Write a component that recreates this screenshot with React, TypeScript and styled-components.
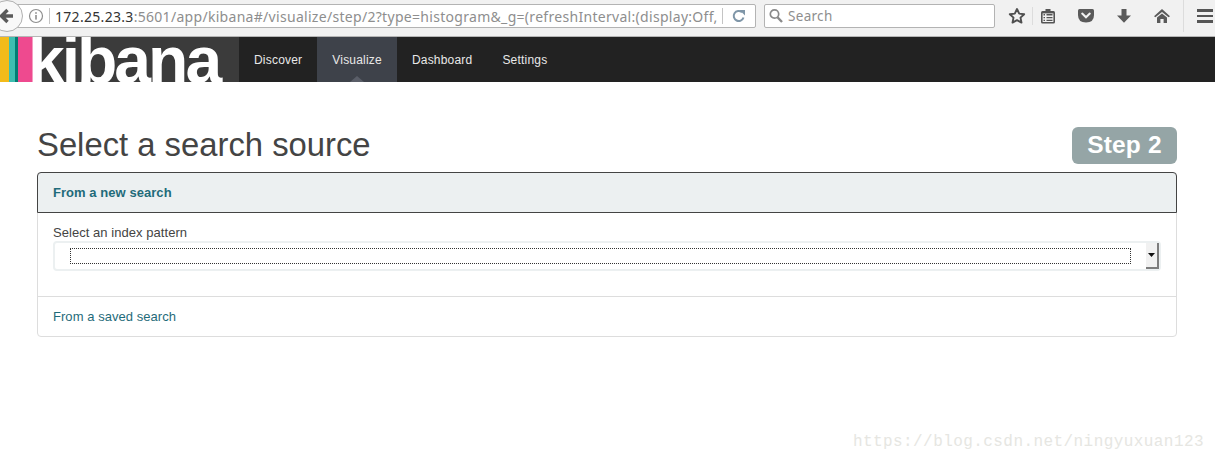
import React from "react";
import styled, { createGlobalStyle } from "styled-components";

const GlobalStyle = createGlobalStyle`
  html, body {
    margin: 0;
    padding: 0;
    background: #fff;
    font-family: "Liberation Sans", Arial, sans-serif;
    overflow: hidden;
  }
`;

const App: React.FC = () => {
  return (
    <Page>
      <GlobalStyle />
      <BrowserBar>
        <BackButton>
          <svg width="15" height="16" viewBox="0 0 15 16">
            <path d="M3 8 H14 M8.5 2 L2.5 8 L8.5 14" fill="none" stroke="#5a5a5a" strokeWidth="3.4" />
          </svg>
        </BackButton>
        <UrlBox>
          <InfoIcon>
            <svg width="16" height="16" viewBox="0 0 16 16">
              <circle cx="8" cy="8" r="6.5" fill="none" stroke="#8e8e8e" strokeWidth="1.2" />
              <rect x="7.2" y="7" width="1.6" height="4.6" fill="#8e8e8e" />
              <rect x="7.2" y="4.2" width="1.6" height="1.6" fill="#8e8e8e" />
            </svg>
          </InfoIcon>
          <UrlDivider />
          <UrlText>
            <UrlHost>172.25.23.3</UrlHost>:5601/app/kibana#/visualize/step/2?type=histogram&amp;_g=(refreshInterval:(display:Off,
          </UrlText>
          <ReloadCell>
            <svg width="14" height="14" viewBox="0 0 14 14">
              <path d="M11.5 8.5 A5 5 0 1 1 10 3.2" fill="none" stroke="#7f96a8" strokeWidth="2" />
              <path d="M7.5 1 L13 1 L13 6.5 Z" fill="#7f96a8" />
            </svg>
          </ReloadCell>
        </UrlBox>
        <SearchBox>
          <svg width="16" height="16" viewBox="0 0 16 16">
            <circle cx="6.5" cy="6" r="4.2" fill="none" stroke="#8a8a8a" strokeWidth="1.7" />
            <path d="M9.5 9.2 L14 14" stroke="#8a8a8a" strokeWidth="2.4" />
          </svg>
          <SearchText>Search</SearchText>
        </SearchBox>
        <ToolIcons>
          <ToolIcon $width={31}>
            <svg width="18" height="18" viewBox="0 0 18 18">
              <path d="M9 2 L11.2 6.6 L16.2 7.2 L12.5 10.6 L13.5 15.6 L9 13.1 L4.5 15.6 L5.5 10.6 L1.8 7.2 L6.8 6.6 Z" fill="none" stroke="#4f4f4f" strokeWidth="1.9" strokeLinejoin="round" />
            </svg>
          </ToolIcon>
          <ToolDivider $height={18} />
          <ToolIcon $width={30}>
            <svg width="16" height="16" viewBox="0 0 16 16">
              <rect x="1" y="3" width="14" height="12.5" rx="1.5" fill="#555" />
              <rect x="5.5" y="1" width="5" height="3.4" fill="#555" />
              <rect x="2.6" y="5.4" width="10.8" height="8.6" fill="#f1f1f1" />
              <path d="M3.5 6.8 H5 M6.5 6.8 H12.5 M3.5 9.6 H5 M6.5 9.6 H12.5 M3.5 12.4 H5 M6.5 12.4 H12.5" stroke="#555" strokeWidth="1.4" />
            </svg>
          </ToolIcon>
          <ToolIcon $width={46}>
            <svg width="18" height="16" viewBox="0 0 18 16">
              <path d="M1 2.5 Q1 1 2.5 1 H15.5 Q17 1 17 2.5 V7 Q17 14.5 9 14.5 Q1 14.5 1 7 Z" fill="#5a5a5a" />
              <path d="M5.2 5.6 L9 9.2 L12.8 5.6" fill="none" stroke="#f1f1f1" strokeWidth="2.1" strokeLinecap="round" />
            </svg>
          </ToolIcon>
          <ToolIcon $width={30}>
            <svg width="16" height="16" viewBox="0 0 16 16">
              <path d="M5.5 1 H10.5 V7.5 H15 L8 14.8 L1 7.5 H5.5 Z" fill="#5a5a5a" />
            </svg>
          </ToolIcon>
          <ToolIcon $width={44}>
            <svg width="18" height="16" viewBox="-1 0 18 16">
              <path d="M9 1 L17 8.2 L15.6 9.2 L9 4 L2.4 9.2 L1 8.2 Z" fill="#5a5a5a" />
              <path d="M4 9.4 L9 5.4 L14 9.4 V15 H10.6 V11 H7.4 V15 H4 Z" fill="#5a5a5a" />
            </svg>
          </ToolIcon>
          <ToolDivider $height={32} />
          <MenuIcon>
            <MenuBar />
            <MenuBar />
            <MenuBar />
          </MenuIcon>
        </ToolIcons>
      </BrowserBar>
      <KibanaNav>
        <Logo>
          <Stripe $color="#f3bb1a" $width={9} />
          <Stripe $color="#3ebeb0" $width={6} />
          <Stripe $color="#017d73" $width={3} />
          <Stripe $color="#ee4a8f" $width={15} />
          <LogoText>kibana</LogoText>
        </Logo>
        <NavItem>Discover</NavItem>
        <NavItem $active>Visualize</NavItem>
        <NavItem>Dashboard</NavItem>
        <NavItem>Settings</NavItem>
      </KibanaNav>
      <Content>
        <TitleRow>
          <Title>Select a search source</Title>
          <StepBadge>Step 2</StepBadge>
        </TitleRow>
        <Panel>
          <PanelHeader>From a new search</PanelHeader>
          <PanelBody>
            <FieldLabel>Select an index pattern</FieldLabel>
            <SelectBox>
              <SelectFocus />
              <SelectArrow>
                <svg width="7" height="4" viewBox="0 0 7 4">
                  <path d="M0 0 H7 L3.5 4 Z" fill="#111" />
                </svg>
              </SelectArrow>
            </SelectBox>
          </PanelBody>
          <PanelFooter>From a saved search</PanelFooter>
        </Panel>
      </Content>
      <Watermark>https://blog.csdn.net/ningyuxuan123</Watermark>
    </Page>
  );
};

export default App;

const Page = styled.div`
  position: relative;
  width: 1215px;
  height: 460px;
  overflow: hidden;
  background: #fff;
`;

const BrowserBar = styled.div`
  display: flex;
  align-items: center;
  height: 36px;
  background: #f1f1f1;
  border-bottom: 1px solid #b5b5b5;
`;

const BackButton = styled.div`
  position: relative;
  z-index: 1;
  flex: none;
  display: flex;
  align-items: center;
  justify-content: flex-end;
  width: 32px;
  height: 32px;
  margin-left: -9px;
  margin-top: -4px;
  padding-right: 8px;
  box-sizing: border-box;
  border-radius: 50%;
  border: 1px solid #b0b0b0;
  background: #f8f8f8;
`;

const UrlBox = styled.div`
  flex: none;
  display: flex;
  align-items: center;
  width: 741px;
  height: 24px;
  margin-left: -8px;
  margin-top: -4px;
  box-sizing: border-box;
  background: #fff;
  border: 1px solid #b3b3b3;
  border-radius: 0 2px 2px 0;
`;

const InfoIcon = styled.span`
  display: flex;
  flex: none;
  margin-left: 12px;
`;

const UrlDivider = styled.span`
  flex: none;
  width: 1px;
  height: 16px;
  margin: 0 5px;
  background: #c4c4c4;
`;

const UrlText = styled.div`
  flex: 1;
  min-width: 0;
  overflow: hidden;
  white-space: nowrap;
  font-family: "Noto Sans", sans-serif;
  font-size: 14px;
  letter-spacing: 0.3px;
  color: #8e8e8e;
`;

const UrlHost = styled.span`
  color: #333;
`;

const ReloadCell = styled.div`
  flex: none;
  display: flex;
  align-items: center;
  justify-content: center;
  width: 32px;
  height: 16px;
  border-left: 1px solid #c4c4c4;
`;

const SearchBox = styled.div`
  flex: none;
  display: flex;
  align-items: center;
  gap: 4px;
  width: 231px;
  height: 24px;
  margin-left: 8px;
  margin-top: -4px;
  padding-left: 3px;
  box-sizing: border-box;
  background: #fff;
  border: 1px solid #b3b3b3;
  border-radius: 2px;
`;

const SearchText = styled.span`
  font-family: "Noto Sans", sans-serif;
  font-size: 13.5px;
  letter-spacing: 0.3px;
  color: #8e8e8e;
`;

const ToolIcons = styled.div`
  flex: none;
  display: flex;
  align-items: center;
  margin-left: 6px;
  margin-top: -4px;
`;

const ToolIcon = styled.span<{ $width: number }>`
  display: flex;
  align-items: center;
  justify-content: center;
  width: ${(p) => p.$width}px;
  height: 24px;
`;

const ToolDivider = styled.span<{ $height: number }>`
  width: 1px;
  height: ${(p) => p.$height}px;
  background: #dcdcdc;
`;

const MenuIcon = styled.span`
  display: flex;
  flex-direction: column;
  gap: 3px;
  margin-left: 13px;
`;

const MenuBar = styled.span`
  width: 16px;
  height: 2.5px;
  background: #555;
`;

const KibanaNav = styled.nav`
  display: flex;
  height: 45px;
  background: #222;
`;

const Logo = styled.div`
  display: flex;
  flex: none;
  width: 239px;
  height: 45px;
  overflow: hidden;
  background: #3b3b3b;
`;

const Stripe = styled.span<{ $color: string; $width: number }>`
  flex: none;
  width: ${(p) => p.$width}px;
  background: ${(p) => p.$color};
`;

const LogoText = styled.span`
  font-family: "Liberation Sans", Arial, sans-serif;
  font-weight: 700;
  font-size: 66px;
  line-height: 45px;
  letter-spacing: -3px;
  color: #fff;
  height: 45px;
  margin-left: -5px;
  padding-top: 1px;
`;

const NavItem = styled.a<{ $active?: boolean }>`
  position: relative;
  display: flex;
  align-items: center;
  padding: 0 15px;
  font-size: 12px;
  letter-spacing: 0.2px;
  color: #e8e8e8;
  background: ${(p) => (p.$active ? "#3e424a" : "transparent")};

  ${(p) =>
    p.$active &&
    `
    &::after {
      content: "";
      position: absolute;
      left: 50%;
      bottom: 0;
      margin-left: -7px;
      border-left: 7px solid transparent;
      border-right: 7px solid transparent;
      border-bottom: 6px solid #5a5e68;
    }
  `}
`;

const Content = styled.main`
  padding: 45px 38px 0 37px;
`;

const TitleRow = styled.div`
  display: flex;
  justify-content: space-between;
  align-items: flex-start;
  height: 45px;
`;

const Title = styled.h1`
  margin: 0;
  font-size: 32.8px;
  line-height: 35px;
  font-weight: 400;
  color: #444;
`;

const StepBadge = styled.div`
  width: 105px;
  height: 37px;
  border-radius: 6px;
  background: #95a5a6;
  color: #fff;
  font-size: 24.5px;
  font-weight: 700;
  line-height: 36px;
  text-align: center;
  letter-spacing: 0.2px;
`;

const Panel = styled.section`
  height: 165px;
  box-sizing: border-box;
  border: 1px solid #ddd;
  border-radius: 4px;
  display: flex;
  flex-direction: column;
`;

const PanelHeader = styled.h2`
  margin: -1px -1px 0;
  height: 41px;
  box-sizing: border-box;
  padding-left: 15px;
  border: 1px solid #444;
  border-radius: 4px 4px 0 0;
  background: #ecf0f1;
  color: #1f6b7a;
  font-size: 13px;
  font-weight: 700;
  line-height: 39px;
  letter-spacing: 0.05px;
`;

const PanelBody = styled.div`
  flex: 1;
  padding: 12px 15px 0;
  border-bottom: 1px solid #ddd;
`;

const FieldLabel = styled.div`
  font-size: 13px;
  line-height: 16px;
  letter-spacing: 0.05px;
  color: #444;
`;

const SelectBox = styled.div`
  display: flex;
  align-items: center;
  justify-content: space-between;
  height: 30px;
  padding: 0 0 0 15px;
  box-sizing: border-box;
  border: 2px solid #ecf0f1;
  border-radius: 4px;
  background: #fff;
`;

const SelectFocus = styled.div`
  width: 1061px;
  height: 16px;
  box-sizing: border-box;
  border: 1px dotted #333;
`;

const SelectArrow = styled.div`
  display: flex;
  align-items: center;
  justify-content: center;
  width: 13px;
  height: 26px;
  box-sizing: border-box;
  background: #f1f1f1;
  border-right: 2px solid #7d7d7d;
  border-bottom: 2px solid #7d7d7d;
`;

const PanelFooter = styled.a`
  height: 39px;
  padding-left: 15px;
  font-size: 13px;
  line-height: 40px;
  letter-spacing: 0.05px;
  color: #1f6b7a;
`;

const Watermark = styled.div`
  position: absolute;
  right: 11px;
  bottom: 9px;
  font-family: "Liberation Mono", "DejaVu Sans Mono", monospace;
  font-size: 16px;
  letter-spacing: 0.43px;
  color: #e6e6e2;
`;
